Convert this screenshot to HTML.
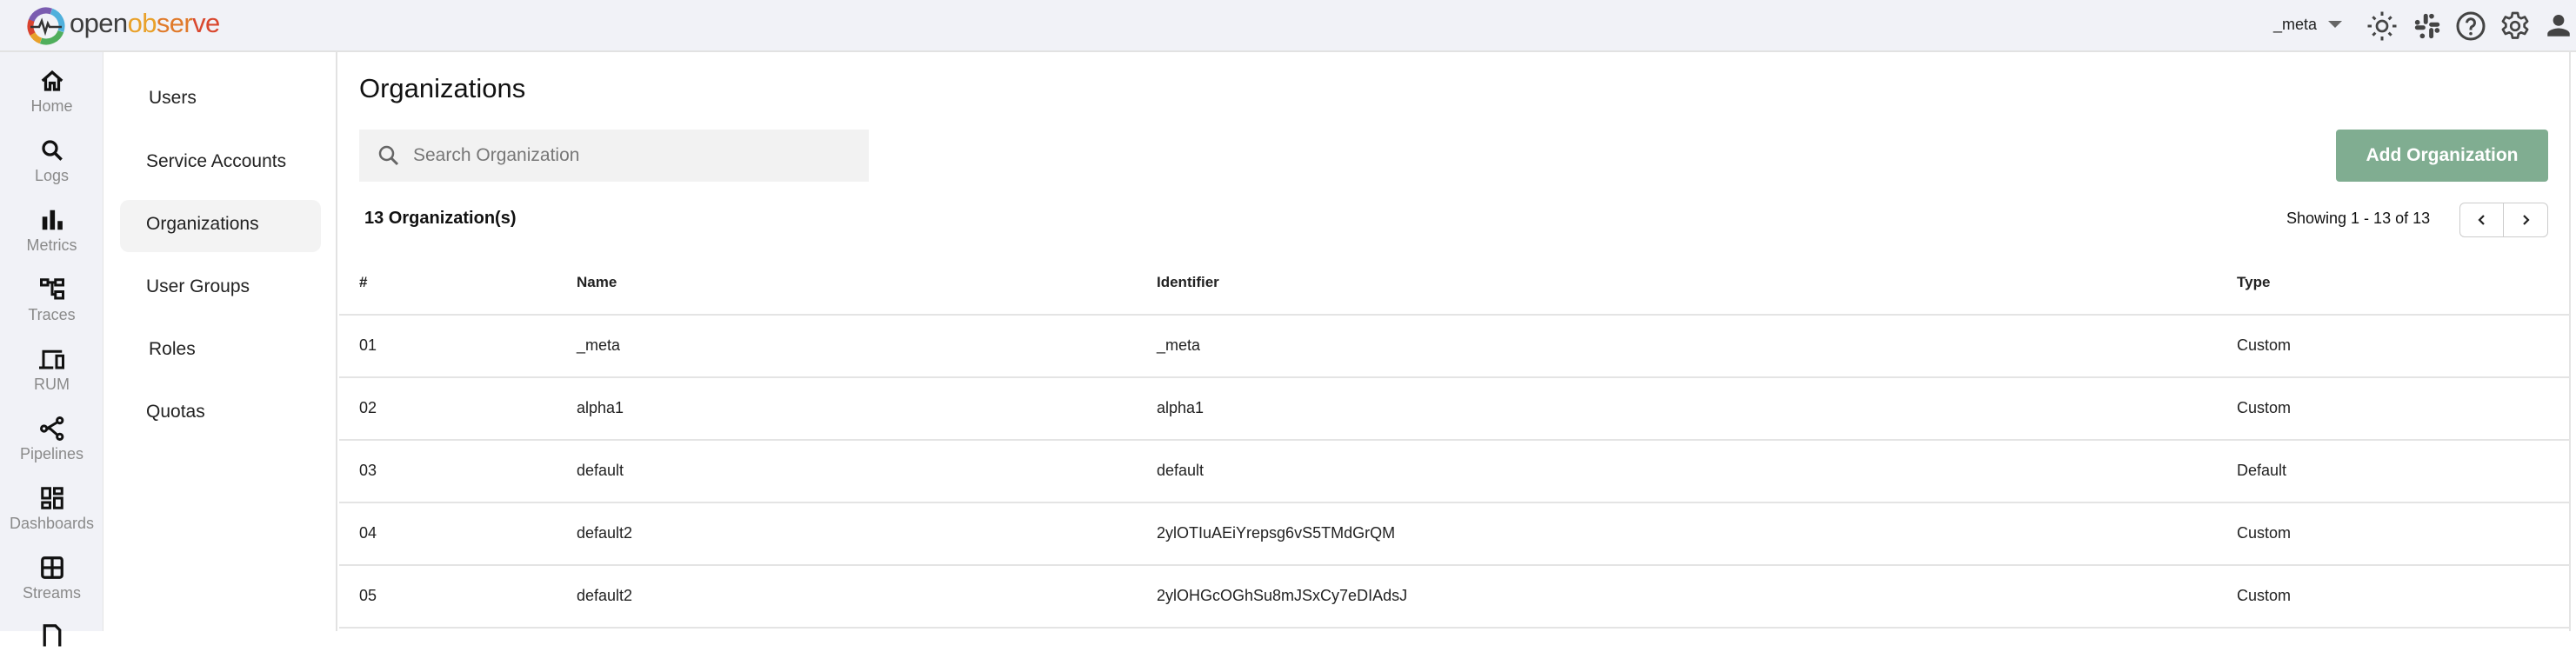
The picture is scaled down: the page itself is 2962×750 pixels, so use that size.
<!DOCTYPE html>
<html><head><meta charset="utf-8"><style>
*{margin:0;padding:0;box-sizing:border-box}
body{width:2962px;height:726px;overflow:hidden;background:#fff;font-family:"Liberation Sans",sans-serif;color:#111;position:relative}
.abs{position:absolute}
#hdr{left:0;top:0;width:2962px;height:60px;background:#f1f2f7;border-bottom:2px solid #e2e2e2}
#nav{left:0;top:60px;width:119px;height:666px;background:#f1f2f7;border-right:1px solid #e4e4e4}
#sub{left:119px;top:60px;width:269px;height:666px;background:#fff;border-right:2px solid #e2e2e2}
.ni{position:absolute;left:0;width:119px;text-align:center;color:#8a8a8a;font-size:18px}
.ni svg{display:block;margin:0 auto 4px}
.si{position:absolute;font-size:21px;color:#222}
.cell{position:absolute;font-size:18px;color:#222}
.hl{position:absolute;left:390px;width:2566px;height:2px;background:#e4e4e4}
</style></head><body>
<div id="hdr" class="abs"></div>
<svg class="abs" style="left:30px;top:7px" width="46" height="46" viewBox="0 0 46 46">
<circle cx="23" cy="23" r="18" fill="none" stroke="#7a5cb0" stroke-width="7" stroke-dasharray="28 200" transform="rotate(200 23 23)"/>
<circle cx="23" cy="23" r="18" fill="none" stroke="#4fb0dc" stroke-width="7" stroke-dasharray="28 200" transform="rotate(290 23 23)"/>
<circle cx="23" cy="23" r="18" fill="none" stroke="#4fae5c" stroke-width="7" stroke-dasharray="28 200" transform="rotate(20 23 23)"/>
<circle cx="23" cy="23" r="18" fill="none" stroke="#e8a02a" stroke-width="7" stroke-dasharray="14 200" transform="rotate(110 23 23)"/>
<circle cx="23" cy="23" r="18" fill="none" stroke="#d9432f" stroke-width="7" stroke-dasharray="16 200" transform="rotate(150 23 23)"/>
<path d="M5 24h10l3-7 4 13 3-10 2 4h14" fill="none" stroke="#333" stroke-width="2.5"/>
</svg>
<div class="abs" style="left:80px;top:9px;font-size:31px;letter-spacing:-0.6px"><span style="color:#3d3d3d">open</span><span style="color:#e9a12a">ob</span><span style="color:#e07a2a">ser</span><span style="color:#d9472e">ve</span></div>
<div class="abs" style="left:2614px;top:18px;font-size:18px;color:#222">_meta</div>
<div class="abs" style="left:2677px;top:24px;width:0;height:0;border-left:8px solid transparent;border-right:8px solid transparent;border-top:8px solid #666"></div>
<svg class="abs" style="left:2721px;top:12px" width="36" height="36" viewBox="0 0 24 24" fill="#444"><circle cx="12" cy="12" r="4" fill="none" stroke="#444" stroke-width="1.8"/><path d="M11 1h2v3h-2zM11 20h2v3h-2zM1 11h3v2H1zM20 11h3v2h-3zM4.2 5.6l1.4-1.4 2 2-1.4 1.4zM16.4 17.8l1.4-1.4 2 2-1.4 1.4zM4.2 18.4l2-2 1.4 1.4-2 2zM16.4 6.2l2-2 1.4 1.4-2 2z"/></svg>
<svg class="abs" style="left:2774px;top:13px" width="34" height="34" viewBox="0 0 24 24" fill="#444"><rect x="9" y="2" width="3.5" height="8.5" rx="1.75"/><rect x="13.5" y="13.5" width="3.5" height="8.5" rx="1.75"/><rect x="2" y="11.5" width="8.5" height="3.5" rx="1.75"/><rect x="13.5" y="9" width="8.5" height="3.5" rx="1.75"/><circle cx="4" cy="9" r="2"/><circle cx="20" cy="15.5" r="2"/><circle cx="15.5" cy="4" r="2"/><circle cx="8" cy="20" r="2"/></svg>
<svg class="abs" style="left:2823px;top:12px" width="36" height="36" viewBox="0 0 24 24"><circle cx="12" cy="12" r="10" fill="none" stroke="#444" stroke-width="2"/><path d="M9 9.5a3 3 0 1 1 4 2.8c-.8.4-1 1-1 2V15" fill="none" stroke="#444" stroke-width="2"/><circle cx="12" cy="17.8" r="1.2" fill="#444"/></svg>
<svg class="abs" style="left:2874px;top:12px" width="36" height="36" viewBox="0 0 24 24"><path d="M10 2h4l.6 3 2 1.1 2.8-1.1 2 3.4-2.3 2v2.2l2.3 2-2 3.4-2.8-1.1-2 1.1-.6 3h-4l-.6-3-2-1.1-2.8 1.1-2-3.4 2.3-2v-2.2l-2.3-2 2-3.4 2.8 1.1 2-1.1z" fill="none" stroke="#444" stroke-width="1.8" stroke-linejoin="round"/><circle cx="12" cy="12" r="3.2" fill="none" stroke="#444" stroke-width="1.8"/></svg>
<svg class="abs" style="left:2925px;top:12px" width="34" height="34" viewBox="0 0 24 24" fill="#444"><circle cx="12" cy="8" r="4.5"/><path d="M3 21v-2c0-3 6-4.5 9-4.5s9 1.5 9 4.5v2z"/></svg>

<div id="nav" class="abs"></div>
<div class="ni" style="top:78px"><svg width="30" height="30" viewBox="0 0 24 24"><path d="M3 12L12 4l9 8M6 10v10h4v-6h4v6h4V10" fill="none" stroke="#111" stroke-width="2.6"/></svg>Home</div>
<div class="ni" style="top:158px"><svg width="30" height="30" viewBox="0 0 24 24"><circle cx="10" cy="10" r="6" fill="none" stroke="#111" stroke-width="2.6"/><path d="M14.5 14.5l6 6" stroke="#111" stroke-width="2.8"/></svg>Logs</div>
<div class="ni" style="top:238px"><svg width="30" height="30" viewBox="0 0 24 24" fill="#111"><rect x="3" y="9" width="4.5" height="12"/><rect x="10" y="3" width="4.5" height="18"/><rect x="17" y="13" width="4.5" height="8"/></svg>Metrics</div>
<div class="ni" style="top:318px"><svg width="30" height="30" viewBox="0 0 24 24" fill="none" stroke="#111" stroke-width="2.4"><rect x="2" y="3" width="6" height="5"/><rect x="15" y="3" width="7" height="5"/><rect x="15" y="14" width="7" height="6"/><path d="M8 5.5h7M12 5.5v11h3"/></svg>Traces</div>
<div class="ni" style="top:398px"><svg width="34" height="30" viewBox="0 0 26 24" fill="none" stroke="#111" stroke-width="2.4"><path d="M5 19V5h17M1 20h13"/><rect x="17" y="9" width="6" height="11"/></svg>RUM</div>
<div class="ni" style="top:478px"><svg width="30" height="30" viewBox="0 0 24 24" fill="none" stroke="#111" stroke-width="2.4"><circle cx="4.5" cy="12" r="2.5"/><circle cx="19" cy="4.5" r="2.5"/><circle cx="19" cy="19.5" r="2.5"/><path d="M7 12l10-6M7 12h3l7 6"/></svg>Pipelines</div>
<div class="ni" style="top:558px"><svg width="30" height="30" viewBox="0 0 24 24" fill="none" stroke="#111" stroke-width="2.4"><rect x="3" y="3" width="7" height="9"/><rect x="14" y="3" width="7" height="5"/><rect x="3" y="16" width="7" height="5"/><rect x="14" y="12" width="7" height="9"/></svg>Dashboards</div>
<div class="ni" style="top:638px"><svg width="30" height="30" viewBox="0 0 24 24" fill="none" stroke="#111" stroke-width="2.6"><rect x="3" y="3" width="18" height="18" rx="2"/><path d="M12 3v18M3 12h18"/></svg>Streams</div>
<div class="ni" style="top:716px"><svg width="30" height="30" viewBox="0 0 24 24"><path d="M5 22V3h10l4 4v15" fill="none" stroke="#111" stroke-width="2.6"/></svg></div>

<div id="sub" class="abs"></div>
<div class="abs" style="left:138px;top:230px;width:231px;height:60px;background:#f3f3f3;border-radius:10px"></div>
<div class="si" style="left:171px;top:101px">Users</div>
<div class="si" style="left:168px;top:174px">Service Accounts</div>
<div class="si" style="left:168px;top:246px">Organizations</div>
<div class="si" style="left:168px;top:318px">User Groups</div>
<div class="si" style="left:171px;top:390px">Roles</div>
<div class="si" style="left:168px;top:462px">Quotas</div>

<div class="abs" style="left:2954px;top:60px;width:2px;height:666px;background:#e4e4e4"></div>
<div class="abs" style="left:413px;top:84px;font-size:31px;color:#111">Organizations</div>
<div class="abs" style="left:413px;top:149px;width:586px;height:60px;background:#f2f2f2"></div>
<svg class="abs" style="left:432px;top:164px" width="30" height="30" viewBox="0 0 24 24"><circle cx="10" cy="10" r="6" fill="none" stroke="#666" stroke-width="2"/><path d="M14.5 14.5l5.5 5.5" stroke="#666" stroke-width="2.4"/></svg>
<div class="abs" style="left:475px;top:167px;font-size:21px;color:#777">Search Organization</div>
<div class="abs" style="left:2686px;top:149px;width:244px;height:60px;background:#80ad91;border-radius:4px;color:#fff;font-weight:bold;font-size:21px;text-align:center;line-height:60px">Add Organization</div>
<div class="abs" style="left:419px;top:240px;font-size:20px;font-weight:bold">13 Organization(s)</div>
<div class="abs" style="left:2629px;top:241px;font-size:18px">Showing 1 - 13 of 13</div>
<div class="abs" style="left:2828px;top:233px;width:102px;height:40px;border:1px solid #ccc;border-radius:6px"></div>
<div class="abs" style="left:2878px;top:233px;width:1px;height:40px;background:#ccc"></div>
<svg class="abs" style="left:2845px;top:244px" width="18" height="18" viewBox="0 0 18 18"><path d="M11 4L6 9l5 5" fill="none" stroke="#222" stroke-width="2.2"/></svg>
<svg class="abs" style="left:2895px;top:244px" width="18" height="18" viewBox="0 0 18 18"><path d="M7 4l5 5-5 5" fill="none" stroke="#222" stroke-width="2.2"/></svg>

<div class="cell" style="left:413px;top:315px;font-weight:bold;font-size:17px">#</div>
<div class="cell" style="left:663px;top:315px;font-weight:bold;font-size:17px">Name</div>
<div class="cell" style="left:1330px;top:315px;font-weight:bold;font-size:17px">Identifier</div>
<div class="cell" style="left:2572px;top:315px;font-weight:bold;font-size:17px">Type</div>
<div class="hl" style="top:361px"></div>
<div class="hl" style="top:433px"></div>
<div class="hl" style="top:505px"></div>
<div class="hl" style="top:577px"></div>
<div class="hl" style="top:649px"></div>
<div class="hl" style="top:721px"></div>

<div class="cell" style="left:413px;top:387px">01</div><div class="cell" style="left:663px;top:387px">_meta</div><div class="cell" style="left:1330px;top:387px">_meta</div><div class="cell" style="left:2572px;top:387px">Custom</div>
<div class="cell" style="left:413px;top:459px">02</div><div class="cell" style="left:663px;top:459px">alpha1</div><div class="cell" style="left:1330px;top:459px">alpha1</div><div class="cell" style="left:2572px;top:459px">Custom</div>
<div class="cell" style="left:413px;top:531px">03</div><div class="cell" style="left:663px;top:531px">default</div><div class="cell" style="left:1330px;top:531px">default</div><div class="cell" style="left:2572px;top:531px">Default</div>
<div class="cell" style="left:413px;top:603px">04</div><div class="cell" style="left:663px;top:603px">default2</div><div class="cell" style="left:1330px;top:603px">2ylOTIuAEiYrepsg6vS5TMdGrQM</div><div class="cell" style="left:2572px;top:603px">Custom</div>
<div class="cell" style="left:413px;top:675px">05</div><div class="cell" style="left:663px;top:675px">default2</div><div class="cell" style="left:1330px;top:675px">2ylOHGcOGhSu8mJSxCy7eDIAdsJ</div><div class="cell" style="left:2572px;top:675px">Custom</div>
</body></html>
